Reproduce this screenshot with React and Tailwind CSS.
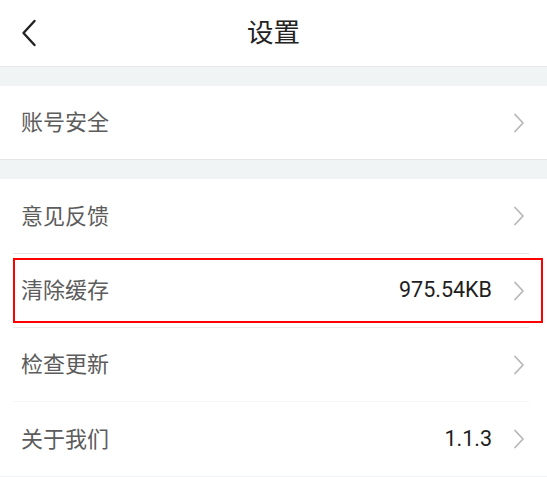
import React from "react";

function ChevronRight() {
  return (
    <svg width="12" height="20" viewBox="0 0 12 20" fill="none" className="shrink-0">
      <path d="M2 1.5 L10 10 L2 18.5" stroke="#b8b8b8" strokeWidth="1.8" strokeLinecap="round" strokeLinejoin="round" />
    </svg>
  );
}

function Row({ label, value, highlight, tall }) {
  return (
    <div className="relative bg-white">
      <div className={"flex items-center pl-[21px] pr-[22px] " + (tall ? "h-[74px]" : "h-[73px]")}>
        <span className="flex-1 text-[22px] text-[#5c5c5c]">{label}</span>
        {value && (
          <span className="mr-[21px] text-[21.5px] text-[#1e1e1e] font-['Roboto','Noto_Sans_CJK_SC',sans-serif]">
            {value}
          </span>
        )}
        <ChevronRight />
      </div>
      {/* annotation box */}
      {highlight && (
        <div className="absolute left-[13px] right-[4px] top-[4px] bottom-[4px] border-2 border-[#ff0000] pointer-events-none" />
      )}
    </div>
  );
}

export default function App() {
  return (
    <div className="w-[547px] h-[477px] overflow-hidden bg-white font-['Roboto','Noto_Sans_CJK_SC',sans-serif]">
      {/* HEADER */}
      <div className="relative h-[67px] flex items-center justify-center border-b border-[#e6e8e9]">
        <svg width="16" height="28" viewBox="0 0 16 28" fill="none" className="absolute left-[21px] top-[19px]">
          <path d="M13.5 2 L2.5 14 L13.5 26" stroke="#222" strokeWidth="2.4" strokeLinecap="round" strokeLinejoin="round" />
        </svg>
        <h1 className="text-[26.5px] text-[#222] leading-none">设置</h1>
      </div>

      <div className="h-[19px] bg-[#f1f4f5]" />

      <div className="border-b border-[#e4e6e7]">
        <Row label="账号安全" />
      </div>

      <div className="h-[19px] bg-[#f1f4f5]" />

      <div className="bg-white">
        <Row label="意见反馈" tall />
        <div className="ml-[13px] mr-[18px] h-px bg-[#e6e6e6]" />
        <Row label="清除缓存" value="975.54KB" highlight />
        <div className="ml-[13px] mr-[18px] h-px bg-[#ececec]" />
        <Row label="检查更新" />
        <div className="ml-[13px] mr-[18px] h-px bg-[#f6f6f6]" />
        <Row label="关于我们" value="1.1.3" tall />
      </div>
      <div className="h-[4px] bg-[#f1f4f5]" />
    </div>
  );
}
